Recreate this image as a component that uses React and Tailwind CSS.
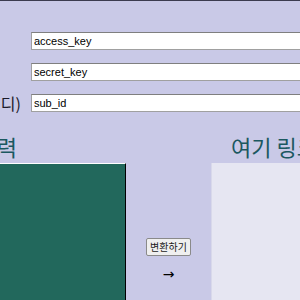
import React from 'react';

const fields = [
  { label: 'Access Key', value: 'access_key' },
  { label: 'Secret Key', value: 'secret_key' },
  { label: 'Sub ID (서브 아이디)', value: 'sub_id' },
];

export default function App() {
  return (
    <div
      className="w-[300px] h-[300px] overflow-hidden bg-[#c9c9e7] border-t border-[#3b3b4f]"
      style={{ fontFamily: '"Noto Sans CJK KR", "Noto Sans", sans-serif' }}
    >
      <div className="ml-[-111px] w-[700px]">
        {/* 키 입력 폼 */}
        <div className="ml-[-8px] flex flex-col gap-[13px] pt-[31px]">
          {fields.map((f) => (
            <div key={f.value} className="flex items-center">
              <span className="w-[150px] shrink-0 whitespace-nowrap text-[16px] leading-none text-[#1a1a2a]">
                {f.label}
              </span>
              <input
                readOnly
                value={f.value}
                className="w-[420px] h-[18px] bg-white border border-[#a0a0a0] border-t-[#7f7f7f] px-[2px] text-[11px] text-black outline-none"
                style={{ fontFamily: '"Liberation Sans", Arial, sans-serif' }}
              />
            </div>
          ))}
        </div>

        {/* 변환 영역 */}
        <div className="flex mt-[25px]">
          <div className="w-[237px] shrink-0 flex flex-col">
            <h2 className="pl-[42px] text-[22px] leading-[19px] text-[#1b5860] whitespace-nowrap">링크 입력</h2>
            <div className="mt-[7px] h-[200px] bg-[#22685c] border border-t-white border-l-white border-r-black border-b-black" />
          </div>
          <div className="w-[85px] shrink-0 flex flex-col items-center pt-[101px]">
            <button className="h-[18px] px-[3px] bg-[#efefef] border border-[#8a8a8a] rounded-[2px] text-[10px] leading-none text-[#1a1a1a]">
              변환하기
            </button>
            <span className="mt-[11px] text-[14px] leading-none text-black" style={{ fontFamily: '"DejaVu Sans", sans-serif' }}>→</span>
          </div>
          <div className="w-[237px] shrink-0 flex flex-col">
            <h2 className="pl-5 text-[22px] leading-[19px] text-[#1b5860] whitespace-nowrap">여기 링크를 확인</h2>
            <div className="mt-[7px] h-[200px] bg-[#e6e6f2] border-l border-[#d8d8ea]" />
          </div>
        </div>
      </div>
    </div>
  );
}
